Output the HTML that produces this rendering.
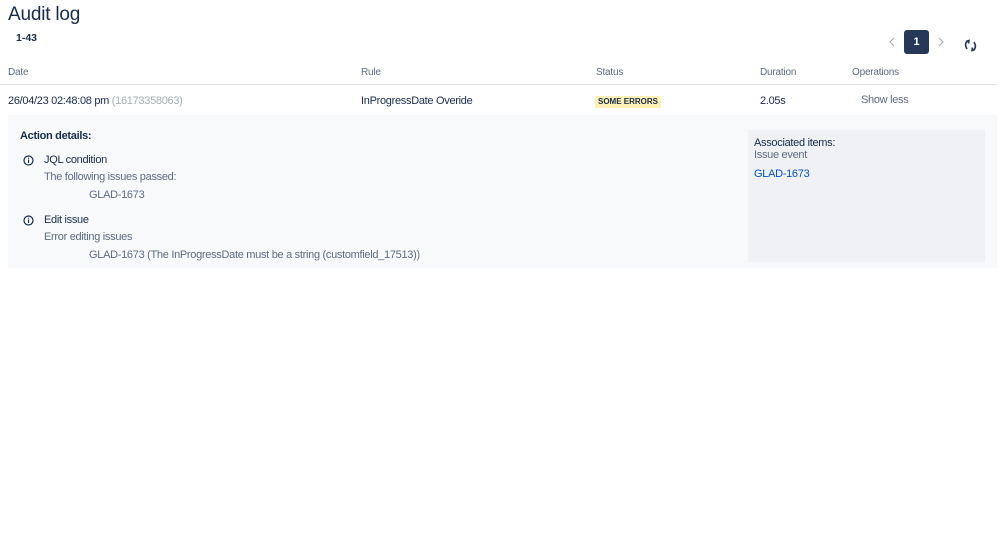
<!DOCTYPE html>
<html><head><meta charset="utf-8"><style>
body{margin:0;width:999px;height:539px;background:#fff;font-family:"Liberation Sans",sans-serif;color:#172b4d;position:relative;overflow:hidden}
.a{position:absolute;white-space:nowrap}
.h{font-size:10px;color:#5e6c84;letter-spacing:-0.2px}
.t{font-size:11px;letter-spacing:-0.3px}
.g{color:#5e6c84}
</style></head><body>
<div class="a" style="left:8px;top:4px;font-size:19px;letter-spacing:-0.2px">Audit log</div>
<div class="a" style="left:16px;top:32px;font-size:10.5px;font-weight:bold">1-43</div>
<svg class="a" style="left:888px;top:37px" width="8" height="10" viewBox="0 0 8 10" fill="none" stroke="#a5adba" stroke-width="1.2"><path d="M6 1 L2 5 L6 9"/></svg>
<div class="a" style="left:904px;top:30px;width:25px;height:24px;background:#253858;border-radius:3px;color:#fff;font-size:11px;font-weight:bold;text-align:center;line-height:24px">1</div>
<svg class="a" style="left:937px;top:37px" width="8" height="10" viewBox="0 0 8 10" fill="none" stroke="#a5adba" stroke-width="1.2"><path d="M2 1 L6 5 L2 9"/></svg>
<svg class="a" style="left:963px;top:38px" width="15" height="15" viewBox="0 0 15 15" fill="none" stroke="#253858" stroke-width="1.6"><path d="M6 2.5 C3 3 2 6 3 9 L4 11"/><path d="M3 3.5 L6 2.5 L5.5 5.5"/><path d="M9 12.5 C12 12 13 9 12 6 L11 4"/><path d="M12 11.5 L9 12.5 L9.5 9.5"/></svg>
<div class="a h" style="left:8px;top:67px">Date</div>
<div class="a h" style="left:361px;top:67px">Rule</div>
<div class="a h" style="left:596px;top:67px">Status</div>
<div class="a h" style="left:760px;top:67px">Duration</div>
<div class="a h" style="left:852px;top:67px">Operations</div>
<div class="a" style="left:0;top:84px;width:997px;height:1px;background:#dfe1e6"></div>
<div class="a t" style="left:8px;top:95px">26/04/23 02:48:08 pm <span style="color:#a5adba">(16173358063)</span></div>
<div class="a t" style="left:361px;top:95px">InProgressDate Overide</div>
<div class="a" style="left:595px;top:96px;background:#fff0b3;border-radius:2px;font-size:8px;font-weight:bold;padding:1px 3px;line-height:10px">SOME ERRORS</div>
<div class="a t" style="left:760px;top:95px">2.05s</div>
<div class="a t g" style="left:861px;top:94px">Show less</div>
<div class="a" style="left:8px;top:115px;width:989px;height:153px;background:#f8f9fb"></div>
<div class="a" style="left:748px;top:130px;width:237px;height:132px;background:#f0f1f4"></div>
<div class="a t" style="left:20px;top:130px;font-weight:bold;font-weight:600">Action details:</div>
<svg class="a" style="left:23px;top:155px" width="11" height="11" viewBox="0 0 11 11"><circle cx="5.5" cy="5.5" r="4.5" fill="none" stroke="#172b4d" stroke-width="1.2"/><rect x="5" y="4.5" width="1.1" height="3.5" fill="#172b4d"/><rect x="5" y="2.7" width="1.1" height="1.1" fill="#172b4d"/></svg>
<div class="a t" style="left:44px;top:154px">JQL condition</div>
<div class="a t g" style="left:44px;top:171px">The following issues passed:</div>
<div class="a t g" style="left:89px;top:189px">GLAD-1673</div>
<svg class="a" style="left:23px;top:215px" width="11" height="11" viewBox="0 0 11 11"><circle cx="5.5" cy="5.5" r="4.5" fill="none" stroke="#172b4d" stroke-width="1.2"/><rect x="5" y="4.5" width="1.1" height="3.5" fill="#172b4d"/><rect x="5" y="2.7" width="1.1" height="1.1" fill="#172b4d"/></svg>
<div class="a t" style="left:44px;top:214px">Edit issue</div>
<div class="a t g" style="left:44px;top:231px">Error editing issues</div>
<div class="a t g" style="left:89px;top:249px">GLAD-1673 (The InProgressDate must be a string (customfield_17513))</div>
<div class="a t" style="left:754px;top:137px">Associated items:</div>
<div class="a t g" style="left:754px;top:149px">Issue event</div>
<div class="a t" style="left:754px;top:168px;color:#0052cc">GLAD-1673</div>
</body></html>
